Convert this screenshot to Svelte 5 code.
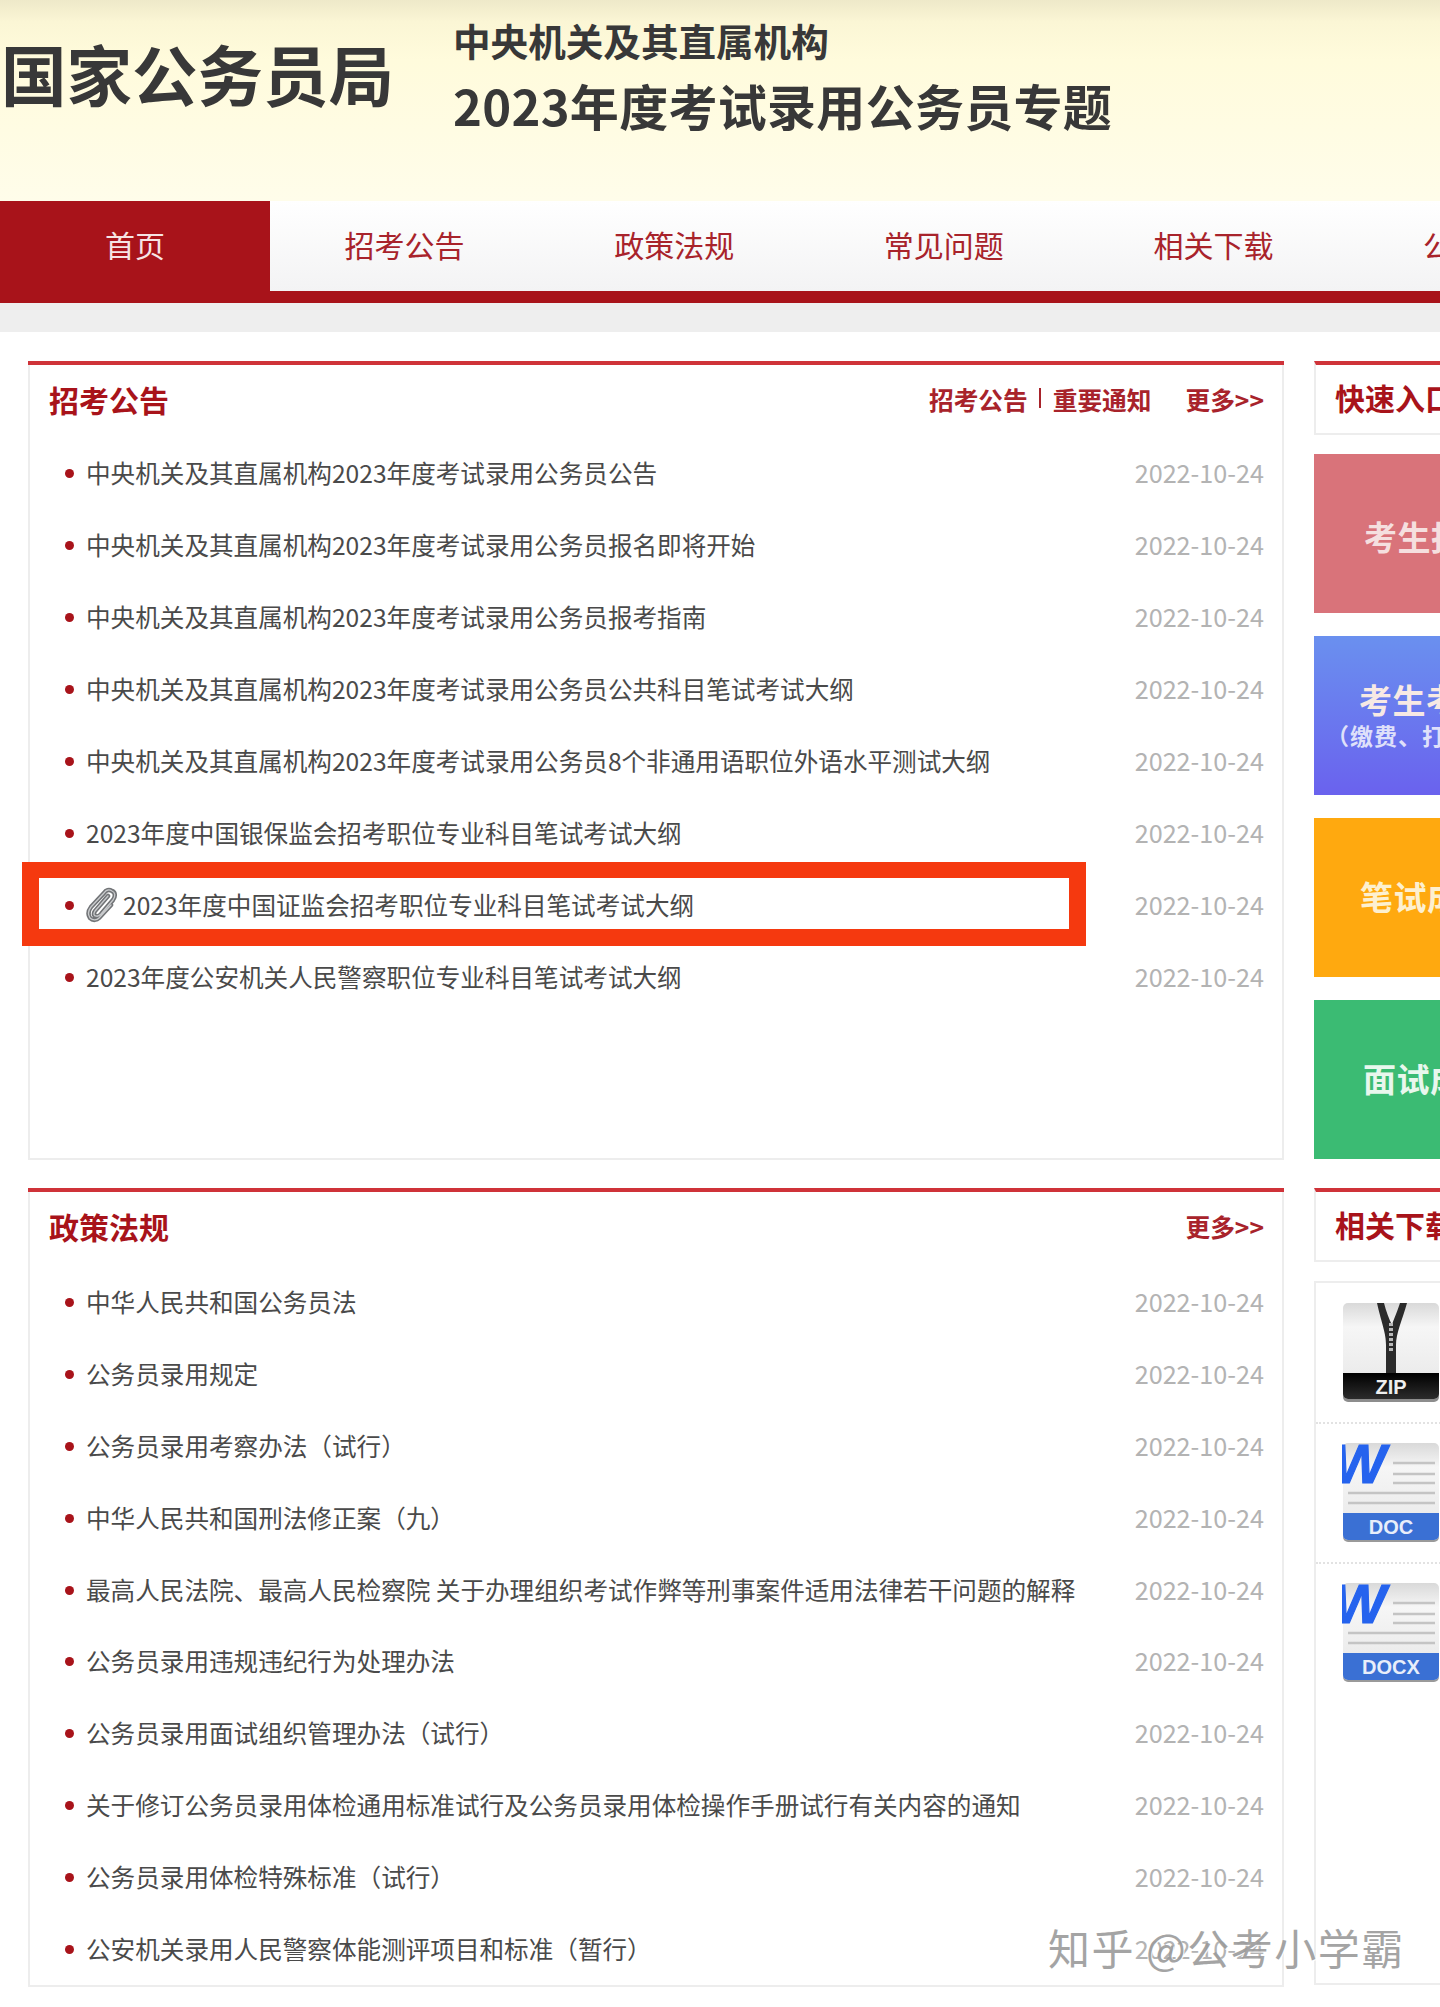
<script>
  const navs = ['首页', '招考公告', '政策法规', '常见问题', '相关下载', '公示公告'];
  const date = '2022-10-24';
  // paperclip centre line, stroked twice for the bevel look
  const clipPath = 'M24 10 L11 25 C9 28 10 30 12 30 C14 31 15 30 17 28 L29 14 C32 10 31 6 28 5 C25 3 22 4 20 7 L7 21 C4 25 4 29 6 32 C9 35 13 34 15 32 L27 19';

  const notices = [
    '中央机关及其直属机构2023年度考试录用公务员公告',
    '中央机关及其直属机构2023年度考试录用公务员报名即将开始',
    '中央机关及其直属机构2023年度考试录用公务员报考指南',
    '中央机关及其直属机构2023年度考试录用公务员公共科目笔试考试大纲',
    '中央机关及其直属机构2023年度考试录用公务员8个非通用语职位外语水平测试大纲',
    '2023年度中国银保监会招考职位专业科目笔试考试大纲',
    '2023年度中国证监会招考职位专业科目笔试考试大纲',
    '2023年度公安机关人民警察职位专业科目笔试考试大纲'
  ];
  const laws = [
    '中华人民共和国公务员法',
    '公务员录用规定',
    '公务员录用考察办法（试行）',
    '中华人民共和国刑法修正案（九）',
    '最高人民法院、最高人民检察院 关于办理组织考试作弊等刑事案件适用法律若干问题的解释',
    '公务员录用违规违纪行为处理办法',
    '公务员录用面试组织管理办法（试行）',
    '关于修订公务员录用体检通用标准试行及公务员录用体检操作手册试行有关内容的通知',
    '公务员录用体检特殊标准（试行）',
    '公安机关录用人民警察体能测评项目和标准（暂行）'
  ];
  const blocks = [
    { cls: 'pink', title: '考生报名入口' },
    { cls: 'blue', title: '考生考务入口', sub: '（缴费、打印准考证）' },
    { cls: 'orange', title: '笔试成绩查询' },
    { cls: 'green', title: '面试成绩查询' }
  ];
</script>

<div class="page">
  <header class="top">
    <div class="org">国家公务员局</div>
    <div class="titles">
      <div class="t1">中央机关及其直属机构</div>
      <div class="t2">2023年度考试录用公务员专题</div>
    </div>
  </header>

  <nav class="nav">
    {#each navs as n, i}
      <div class="tab" class:on={i === 0}>{n}</div>
    {/each}
  </nav>
  <div class="band"></div>

  <main class="grid">
    <section class="panel">
      <div class="head">
        <h2>招考公告</h2>
        <div class="links">
          <span>招考公告</span><i class="sep"></i><span>重要通知</span><span class="more">更多&gt;&gt;</span>
        </div>
      </div>
      <ul class="list">
        {#each notices as t, i}
          <li>
            <b class="dot"></b>
            {#if i === 6}
              <svg class="clip" viewBox="0 0 34 38" width="34" height="38">
                <path d={clipPath} fill="none" stroke="#727477" stroke-width="4.500" stroke-linecap="round"/>
                <path d={clipPath} fill="none" stroke="#c9cbcd" stroke-width="1.300" stroke-linecap="round"/>
              </svg>
            {/if}
            <span class="txt">{t}</span>
            <span class="date">{date}</span>
            {#if i === 6}<span class="frame"></span>{/if}
          </li>
        {/each}
      </ul>
    </section>

    <aside class="side">
      <div class="head small"><h2>快速入口</h2></div>
      <div class="blocks">
        {#each blocks as b}
          <div class="block {b.cls}">
            <div class="bt">{b.title}</div>
            {#if b.sub}<div class="bs">{b.sub}</div>{/if}
          </div>
        {/each}
      </div>
    </aside>

    <section class="panel">
      <div class="head">
        <h2>政策法规</h2>
        <div class="links"><span class="more">更多&gt;&gt;</span></div>
      </div>
      <ul class="list tight">
        {#each laws as t}
          <li>
            <b class="dot"></b>
            <span class="txt">{t}</span>
            <span class="date">{date}</span>
          </li>
        {/each}
      </ul>
    </section>

    <aside class="side">
      <div class="head small"><h2>相关下载</h2></div>
      <div class="files">
        <div class="file">
          <svg viewBox="0 0 98 100" width="98" height="100">
            <defs>
              <linearGradient id="paper" x1="0" y1="0" x2="0" y2="1">
                <stop offset="0" stop-color="#d9d9d9"/><stop offset=".25" stop-color="#f6f6f6"/><stop offset="1" stop-color="#e6e6e6"/>
              </linearGradient>
              <linearGradient id="black" x1="0" y1="0" x2="0" y2="1">
                <stop offset="0" stop-color="#000"/><stop offset="1" stop-color="#2c2c2c"/>
              </linearGradient>
            </defs>
            <rect x="1" y="3" width="96" height="96" rx="5" fill="#8d8d8d"/>
            <rect x="1" y="0" width="96" height="96" rx="5" fill="url(#paper)"/>
            <path d="M35 0 C40 22 44 30 44 42 L44 72 L54 72 L54 42 C54 30 60 18 65 0 L58 0 C54 12 51 18 50 22 C47 16 44 8 42 0 Z" fill="#2b2b2b"/>
            <path d="M49 20 L49 50" stroke="#b9b9b9" stroke-width="4" stroke-dasharray="3 2"/>
            <path d="M1 70 H97 V91 A5 5 0 0 1 92 96 H6 A5 5 0 0 1 1 91 Z" fill="url(#black)"/>
            <text x="49" y="91" class="ft" fill="#eee">ZIP</text>
          </svg>
        </div>
        <div class="file">
          <svg viewBox="0 0 98 100" width="98" height="100">
            <rect x="1" y="3" width="96" height="96" rx="5" fill="#9a9a9a"/>
            <rect x="1" y="0" width="96" height="97" rx="5" fill="url(#paper)"/>
            <text x="-9" y="40" class="w">W</text>
            <path d="M51 20 H93 M51 31 H93 M51 40 H93 M6 50 H93 M6 60 H93" stroke="#c4c4c4" stroke-width="2.500"/>
            <path d="M1 70 H97 V92 A5 5 0 0 1 92 97 H6 A5 5 0 0 1 1 92 Z" fill="#3a70d4"/>
            <text x="49" y="91" class="ft" fill="#e8eefa">DOC</text>
          </svg>
        </div>
        <div class="file">
          <svg viewBox="0 0 98 100" width="98" height="100">
            <rect x="1" y="3" width="96" height="96" rx="5" fill="#9a9a9a"/>
            <rect x="1" y="0" width="96" height="97" rx="5" fill="url(#paper)"/>
            <text x="-9" y="40" class="w">W</text>
            <path d="M51 20 H93 M51 31 H93 M51 40 H93 M6 50 H93 M6 60 H93" stroke="#c4c4c4" stroke-width="2.500"/>
            <path d="M1 70 H97 V92 A5 5 0 0 1 92 97 H6 A5 5 0 0 1 1 92 Z" fill="#3a70d4"/>
            <text x="49" y="91" class="ft" fill="#e8eefa">DOCX</text>
          </svg>
        </div>
      </div>
    </aside>
  </main>

  <div class="mark">知乎 @公考小学霸</div>
</div>

<style>
  :global(body){margin:0;background:#fff}
  .page{position:relative;width:1440px;height:2007px;overflow:hidden;font-family:"Noto Sans CJK SC","Noto Sans",sans-serif;color:#444;background:#fff}

  .top{height:201px;box-sizing:border-box;display:flex;background:linear-gradient(#eee9c9 0,#fbf6d5 22px,#fffbdc 60px,#fffdea 200px);color:#383838}
  .org{width:453px;padding:32px 0 0 1px;box-sizing:border-box;font-size:65.500px;line-height:82px;font-weight:700}
  .t1{margin-top:14px;font-size:37.600px;line-height:52px;font-weight:700}
  .t2{margin-top:5px;font-size:49px;line-height:68px;font-weight:700;letter-spacing:.3px}

  .nav{display:flex;height:90px;background:linear-gradient(#fff,#f3f3f4);border-bottom:12px solid #a8131a}
  .tab{flex:0 0 270px;text-align:center;font-size:30px;line-height:87px;color:#a8232b;margin-left:-.4px}
  .tab.on{background:#a8131a;color:#f6e4e4;flex-basis:270px;margin-left:0}
  .band{height:29px;background:#eeeeee}

  .grid{display:grid;grid-template-columns:1256px 300px;grid-template-rows:799px 799px;column-gap:30px;row-gap:28px;padding:29px 0 0 28px}
  .panel{position:relative;box-sizing:border-box;border:2px solid #ededed;border-top:0;background:#fff}
  .head{box-sizing:border-box;height:76px;display:flex;align-items:center;justify-content:space-between;padding:0 20px 5px 21px;border-top:4px solid #cf3339;margin:0 -2px}
  .head h2{margin:0;font-size:30px;line-height:40px;font-weight:700;color:#a8131a}
  .links{display:flex;align-items:center;font-size:24.700px;font-weight:700;color:#a8232b}
  .sep{width:2px;height:20px;margin:0 12px 2px 11px;background:#a8232b}
  .more{margin-left:34px}

  .list{list-style:none;margin:0;padding:0}
  .list.tight{padding-top:3px}
  .list li{position:relative;box-sizing:border-box;height:72px;display:flex;align-items:center;padding:0 18px 3px 35px}
  .list.tight li{height:71.800px}
  .dot{flex:0 0 9px;width:9px;height:9px;border-radius:50%;background:#a8131a;margin:3px 12px 0 0}
  .clip{flex:0 0 34px;margin:3px 5px 0 -2px}
  .txt{flex:1;font-size:24.600px;white-space:nowrap;color:#4a4a4a}
  .date{font-size:25.200px;color:#b3b3b3}
  .frame{position:absolute;left:-8px;top:-7px;width:1064px;height:84px;box-sizing:border-box;border:solid #f5390f;border-width:16px 17px 17px 17px;pointer-events:none}

  .side{min-width:0}
  .small{height:74px;border:2px solid #ededed;border-top:4px solid #cf3339;margin:0;padding-left:19px;justify-content:flex-start;white-space:nowrap}
  .blocks{display:flex;flex-direction:column;gap:23px;margin-top:19px}
  .block{height:159px;box-sizing:border-box;padding:0 0 3px 49px;display:flex;flex-direction:column;justify-content:center;white-space:nowrap;color:#f7e9e4;font-weight:700}
  .bt{font-size:33px;line-height:42px;letter-spacing:.5px}
  .bs{font-size:23px;line-height:30px;letter-spacing:1px;margin-left:-33px;font-weight:700;color:#dfe0fa}
  .pink{background:#d9737a;color:#f5dfdf;padding:4px 0 0 50px}
  .blue{background:linear-gradient(#6a90ef,#6a62ee);padding-left:45px}
  .orange{background:#ffa90f;padding-left:46px;color:#fdf0d0}
  .green{background:#3bbb73;color:#e8f7ed}

  .files{margin-top:19px;height:704px;box-sizing:border-box;border:2px solid #ededed;padding:20px 0 0 26px}
  .file{height:100px;padding-bottom:19px;margin-bottom:19px;margin-left:-26px;padding-left:26px;border-bottom:2px dotted #e2e2e2}
  .file:last-child{border-bottom:0}
  .file svg{display:block;overflow:hidden}
  .ft{font:700 20px "Liberation Sans",sans-serif;text-anchor:middle}
  .w{font:italic 700 56px "Liberation Sans",sans-serif;fill:#2563ee;stroke:#2563ee;stroke-width:1.200px}

  .mark{position:absolute;left:1048px;top:1921px;font-size:42px;line-height:52px;letter-spacing:1.500px;color:#9b9b9b;opacity:.9;text-shadow:1px 1px 0 #fff;white-space:nowrap;pointer-events:none}
</style>
